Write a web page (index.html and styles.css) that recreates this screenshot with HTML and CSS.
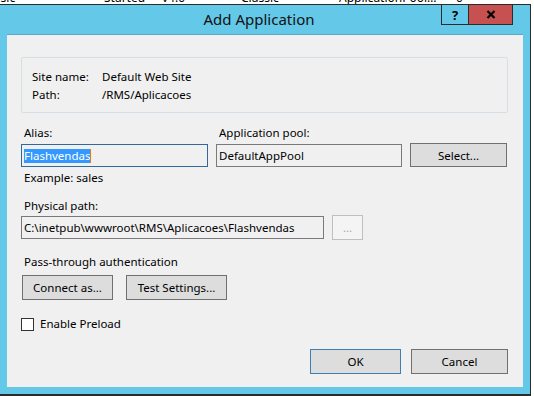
FILE: index.html
```html
<!DOCTYPE html>
<html lang="en">
<head>
  <meta charset="UTF-8">
  <title>Add Application</title>
  <link rel="stylesheet" href="styles.css">
</head>
<body>

  <!-- List view behind the dialog, mostly hidden -->
  <div class="backdrop">
    <div class="backdrop-row">
      <span class="col col-1">Basic</span>
      <span class="col col-2">Started</span>
      <span class="col col-3">v4.0</span>
      <span class="col col-4">Classic</span>
      <span class="col col-5">ApplicationPoolIdentity</span>
      <span class="col">0</span>
    </div>
  </div>

  <div class="dialog">
    <div class="titlebar">
      <div class="title">Add Application</div>
      <div class="caption">
        <div class="cap help">?</div>
        <div class="cap close">
          <svg width="10" height="9" viewBox="0 0 10 9">
            <path d="M1.5 1 L8.5 8 M8.5 1 L1.5 8" stroke="#000" stroke-width="2.2" fill="none"/>
          </svg>
        </div>
      </div>
    </div>

    <div class="client">
      <div class="group">
        <span>Site name:</span><span>Default Web Site</span>
        <span>Path:</span><span>/RMS/Aplicacoes</span>
      </div>

      <div class="labels3">
        <span>Alias:</span>
        <span>Application pool:</span>
      </div>
      <div class="fields3">
        <div class="field focus"><span class="sel">Flashvendas</span><span class="caret"></span></div>
        <div class="field">DefaultAppPool</div>
        <button class="btn">Select...</button>
      </div>
      <div class="hint">Example: sales</div>

      <div class="label">Physical path:</div>
      <div class="path-row">
        <div class="field path">C:\inetpub\wwwroot\RMS\Aplicacoes\Flashvendas</div>
        <button class="btn browse">...</button>
      </div>

      <div class="label auth-label">Pass-through authentication</div>
      <div class="auth">
        <button class="btn connect">Connect as...</button>
        <button class="btn test">Test Settings...</button>
      </div>

      <div class="check">
        <span class="box"></span>
        <span>Enable Preload</span>
      </div>

      <div class="footer">
        <button class="btn ok">OK</button>
        <button class="btn cancel">Cancel</button>
      </div>
    </div>
  </div>

</body>
</html>
```

FILE: styles.css
```css
/* General styles */
html, body {
  margin: 0;
  padding: 0;
  height: 100%;
  overflow: hidden;
  background-color: #ffffff;
}

body {
  font-family: "Noto Sans", sans-serif;
  font-size: 11.5px;
  color: #000000;
}

/* List view peeking above the dialog */
.backdrop {
  height: 4px;
  overflow: hidden;
  white-space: nowrap;
}

.backdrop-row {
  display: flex;
  margin-top: -9px;
  font-size: 12px;
  line-height: 13px;
}

.col {
  flex: none;
  overflow: hidden;
}

.col-1 { width: 118px; margin-left: -14px; }
.col-2 { width: 58px; }
.col-3 { width: 79px; }
.col-4 { width: 98px; }
.col-5 {
  width: 101px;
  margin-right: 16px;
  text-overflow: ellipsis;
}

/* Dialog frame */
.dialog {
  width: 531px;
  height: 392px;
  box-sizing: border-box;
  border: 1px solid #2b2b2b;
  border-left: 0;
  border-bottom-width: 2px;
  background-color: #64c8e8;
  display: flex;
  flex-direction: column;
}

.titlebar {
  height: 29px;
  display: flex;
  align-items: flex-start;
}

.title {
  flex: 1;
  padding-left: 77px;
  text-align: center;
  font-size: 15px;
  line-height: 29px;
  color: #111;
}

.caption {
  display: flex;
  margin-right: 17px;
}

.cap {
  height: 20px;
  box-sizing: border-box;
  border: 1px solid #2b2b2b;
  border-top: 0;
  display: flex;
  align-items: center;
  justify-content: center;
  font-weight: bold;
  font-size: 13px;
}

.help {
  width: 27px;
  border-right: 0;
}

.close {
  width: 45px;
  background-color: #c75050;
}

/* Client area */
.client {
  height: 353px;
  margin: 0 7px;
  box-sizing: border-box;
  padding: 22px 15px 0 14px;
  border-top: 1px solid #58a9c7;
  background-color: #f0f0f0;
}

.group {
  height: 56px;
  box-sizing: border-box;
  border: 1px solid #d5dfe5;
  border-radius: 2px;
  padding: 9px 10px;
  display: grid;
  grid-template-columns: 70px auto;
  grid-auto-rows: 18px;
  align-items: center;
}

.labels3, .fields3 {
  display: grid;
  grid-template-columns: 187px 186px 97px;
  column-gap: 8px;
}

.labels3 {
  margin-top: 12px;
  padding-left: 3px;
  line-height: 16px;
}

.fields3 {
  margin-top: 2px;
  height: 24px;
  align-items: end;
}

.field {
  height: 23px;
  box-sizing: border-box;
  border: 1px solid #7a7a7a;
  padding: 0 2px;
  line-height: 21px;
  white-space: nowrap;
  overflow: hidden;
  display: flex;
  align-items: center;
}

.field.focus {
  border-color: #33699a;
}

.sel {
  background-color: #3399ff;
  color: #ffffff;
  line-height: 14px;
}

.caret {
  width: 1px;
  height: 14px;
  background-color: #e07a1c;
}

.btn {
  height: 24px;
  box-sizing: border-box;
  border: 1px solid #707070;
  background-color: #dddddd;
  font-family: inherit;
  font-size: inherit;
  color: #000000;
  padding: 0;
  margin: 0;
}

.hint {
  margin-top: 3px;
  padding-left: 3px;
  line-height: 16px;
}

.label {
  margin-top: 12px;
  padding-left: 3px;
  line-height: 16px;
}

.path-row {
  display: flex;
  align-items: center;
  gap: 8px;
  margin-top: 1px;
  height: 25px;
}

.path {
  width: 303px;
}

.browse {
  width: 31px;
  height: 25px;
  border-color: #bfbfbf;
  background-color: #f4f4f4;
  color: #a8a8a8;
}

.auth-label {
  margin-top: 14px;
}

.auth {
  display: flex;
  gap: 13px;
  margin-top: 5px;
  padding-left: 1px;
}

.connect { width: 91px; height: 25px; }
.test { width: 101px; height: 25px; }

.check {
  display: flex;
  align-items: center;
  gap: 6px;
  margin-top: 16px;
  line-height: 16px;
}

.box {
  width: 13px;
  height: 13px;
  box-sizing: border-box;
  border: 1px solid #333333;
  background-color: #ffffff;
}

.footer {
  display: flex;
  justify-content: flex-end;
  gap: 10px;
  margin-top: 17px;
}

.ok { width: 91px; height: 25px; border-color: #3c7fb1; }
.cancel { width: 97px; height: 25px; }
```
